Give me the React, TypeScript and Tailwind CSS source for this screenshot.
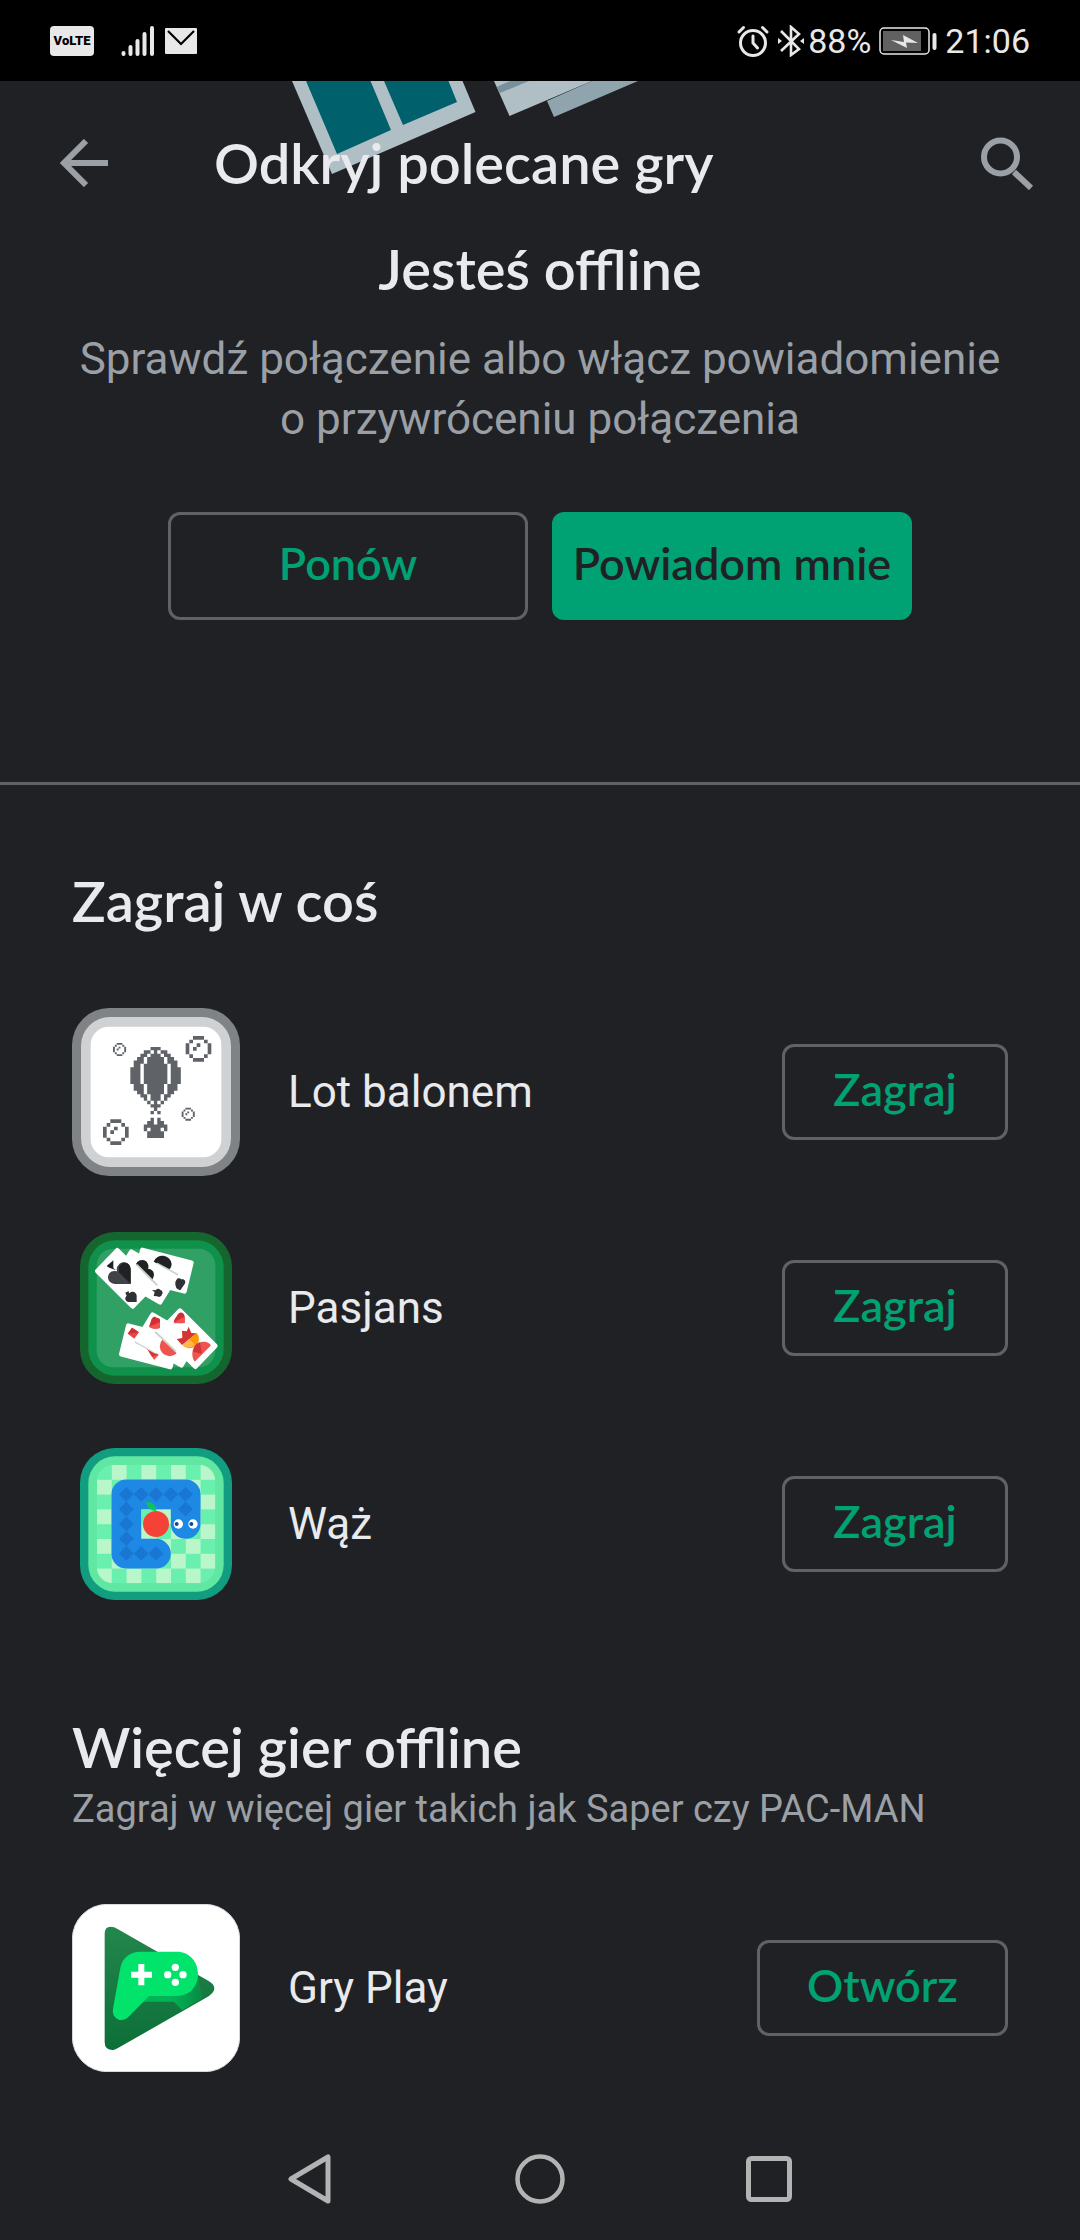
import React from 'react'

const BALLOON = [
    '......###......',
    '....##.#.##....',
    '...##.###.##...',
    '..##.#####.##..',
    '.###.#####.###.',
    '.##.#######.##.',
    '###.#######.###',
    '###.#######.###',
    '###.#######.###',
    '###.#######.###',
    '###.#######.###',
    '.###.#####.###.',
    '.###.#####.###.',
    '..##.#####.##..',
    '...##.###.##...',
    '....#.###.#....',
    '.....#.#.#.....',
    '......###......',
    '.......#.......',
    '......#.#......',
    '...............',
    '......#.#......',
    '.....##.##.....',
    '....#######....',
    '....#.###.#....',
    '.....#####.....',
    '.....#####.....',
]

const BUBBLE = [
    '..###..',
    '.#...#.',
    '#..#..#',
    '#.#...#',
    '#.....#',
    '.#...#.',
    '..###..',
]

const Pixels = ({ rows, x, y, size }: { rows: string[], x: number, y: number, size: number }) => {
    const d = rows.flatMap((row, r) => row.split('').map((cell, c) => (
        cell === '#' ? `M${x + c * size} ${y + r * size}h${size}v${size}h${-size}z` : ''
    ))).join('')
    return <path d={d} fill='#5f6368' />
}

const BalloonIcon = () => (
    <svg viewBox='36 54 504 504' className='size-[168px] shrink-0' aria-hidden='true'>
        <rect x='36' y='54' width='504' height='504' rx='112' fill='#7f8385' />
        <rect x='63' y='81' width='450' height='450' rx='86' fill='#cfd1d3' />
        <rect x='92' y='110' width='392' height='392' rx='54' fill='#fff' />
        <Pixels rows={BALLOON} x={211} y={171} size={10.1} />
        <Pixels rows={BUBBLE} x={377} y={138} size={11} />
        <Pixels rows={BUBBLE} x={129} y={388} size={11} />
        <Pixels rows={BUBBLE} x={159} y={159} size={5.6} />
        <Pixels rows={BUBBLE} x={365} y={353} size={5.6} />
    </svg>
)

const card = { fill: '#fff', stroke: '#fff', strokeWidth: 14, strokeLinejoin: 'round' as const }

const CardsIcon = () => (
    <svg viewBox='36 42 504 504' className='size-[168px] shrink-0' aria-hidden='true'>
        <rect x='60' y='66' width='456' height='456' rx='104' fill='#15652f' />
        <rect x='85' y='91' width='406' height='406' rx='80' fill='#0f904b' />
        <rect x='110' y='116' width='356' height='356' rx='50' fill='#30a064' />
        <path d='M247 120 394 158 373 244 225 206Z' {...card} />
        <path d='M281 155A28 28 0 0 1 335 162Q334 175 325 180Z' fill='#202124' />
        <path d='M346 218C344 204 358 202 364 208C374 206 379 214 374 222L361 241Q344 236 346 218Z' fill='#303134' />
        <path d='M290 160 354 194' stroke='#c8d5cb' strokeWidth='5' />
        <path d='M214 125 346 202 300 277 168 200Z' {...card} />
        <path d='M228 162A19 19 0 0 1 264 176A18 18 0 0 1 280 202L276 212Z' fill='#202124' />
        <path d='M281 258 284 247 276 240 287 241A8 8 0 0 1 301 240A8 8 0 0 1 306 253A9 9 0 0 1 292 259Z' fill='#303134' />
        <path d='M230 164 292 226' stroke='#c8d5cb' strokeWidth='6' />
        <path d='M172 121 278 227 218 289 112 183Z' {...card} />
        <path d='M140 168 160 151V174L168 181Q146 173 140 168Z' fill='#202124' />
        <path d='M178 162C190 151 211 159 212 178V222H166C145 220 139 202 148 190Q156 180 171 184Q168 171 178 162Z' fill='#424346' />
        <path d='M177 187V172C190 148 212 158 212 180V222Z' fill='#202124' />
        <path d='M196 248 206 243 207 250C216 240 230 246 230 257V276H209C196 276 192 264 200 257Z' fill='#303134' />
        <path d='M331 471 184 433 205 347 353 385Z' {...card} />
        <path d='M203 371 216 353 237 367 223 386Z' fill='#e5484a' />
        <path d='M203 371 216 353 237 367Z' fill='#cf3033' />
        <path d='M260 414 299 432 282 450Z' fill='#ef5350' />
        <path d='M260 414 299 432 276 440Z' fill='#d33537' />
        <path d='M225 395 288 430' stroke='#c8d5cb' strokeWidth='5' />
        <path d='M364 466 232 389 278 314 410 391Z' {...card} />
        <path d='M267 350 275 326Q283 315 291 324Q302 323 300 335L300 354Q280 360 267 350Z' fill='#cf3033' />
        <path d='M267 350 300 336V354Q280 360 267 350Z' fill='#ef5350' />
        <path d='M308 388 350 430A27 27 0 1 1 308 388Z' fill='#ef5350' />
        <path d='M286 366 348 424' stroke='#c8d5cb' strokeWidth='6' />
        <path d='M406 470 300 364 360 302 466 408Z' {...card} />
        <path d='M341 337C342 326 349 322 354 312C362 302 374 309 374 320V338Z' fill='#cf3033' />
        <path d='M341 337 374 320V340H350Q342 341 341 337Z' fill='#ef5350' />
        <path d='M350 387 367 384 366 362 380 364 386 350 394 369 410 370 366 405Z' fill='#d33537' />
        <path d='M410 368A25 25 0 0 1 367 405Z' fill='#ff9800' />
        <path d='M388 387 404 404A25 25 0 0 1 367 405Z' fill='#ffb74d' />
        <path d='M404 455C388 430 402 397 425 396C440 394 451 400 452 407Z' fill='#ef5350' />
        <path d='M399 425Q402 402 420 397L426 431Z' fill='#d33537' />
    </svg>
)

const CELL = 44.4
const SNAKE_BODY = [
    [0, 0], [1, 0], [2, 0], [3, 0], [4, 0], [4, 1],
    [0, 1], [0, 2], [0, 3], [0, 4], [1, 4], [2, 4],
]

const SnakeIcon = () => (
    <svg viewBox='36 30 504 504' className='size-[168px] shrink-0' aria-hidden='true'>
        <defs>
            <clipPath id='board'>
                <rect x='110' y='104' width='356' height='356' rx='50' />
            </clipPath>
        </defs>
        <rect x='60' y='54' width='456' height='456' rx='104' fill='#129c80' />
        <rect x='85' y='79' width='406' height='406' rx='80' fill='#60e8a2' />
        <g clipPath='url(#board)'>
            <rect x='110' y='104' width='356' height='356' fill='#69f0ae' />
            {Array.from({ length: 64 }, (_, i) => {
                const col = i % 8
                const row = Math.floor(i / 8)
                return (col + row) % 2 === 1 && (
                    <rect key={i} x={111 + col * CELL} y={105 + row * CELL} width={CELL} height={CELL} fill='#b9f6ca' />
                )
            })}
        </g>
        <path d='M377 282V193H199V371H288' fill='none' stroke='#1e88e5' strokeWidth='89' strokeLinecap='round' strokeLinejoin='round' />
        {SNAKE_BODY.map(([col, row]) => {
            const x = 199 + col * CELL
            const y = 193 + row * CELL
            return <path key={`${col}-${row}`} d={`M${x} ${y - 22}L${x + 22} ${y}L${x} ${y + 22}L${x - 22} ${y}Z`} fill='#1976d2' />
        })}
        <circle cx='288' cy='282' r='39' fill='#f44336' />
        <path d='M258 216Q288 214 289 243Q264 242 258 216Z' fill='#0fc25b' />
        <circle cx='355' cy='282' r='14' fill='#fff' />
        <circle cx='399' cy='282' r='14' fill='#fff' />
        <circle cx='350' cy='282' r='6' fill='#0d47a1' />
        <circle cx='394' cy='282' r='6' fill='#0d47a1' />
    </svg>
)

const PlayGamesIcon = () => (
    <svg viewBox='36 42 504 504' className='size-[168px] shrink-0' aria-hidden='true'>
        <defs>
            <linearGradient id='triangle' x1='0' y1='0' x2='0' y2='1'>
                <stop offset='0' stopColor='#23864d' />
                <stop offset='1' stopColor='#0b6f37' />
            </linearGradient>
            <linearGradient id='shade' x1='0' y1='0' x2='1' y2='0'>
                <stop offset='0.5' stopColor='#00b356' />
                <stop offset='1' stopColor='#0a8a45' />
            </linearGradient>
        </defs>
        <rect x='37' y='43' width='502' height='502' rx='104' fill='#fff' stroke='#dadce0' strokeWidth='3' />
        <path d='M134 132Q134 105 162 112Q166 113 174 118L446 273Q480 294 446 319L174 474Q166 479 160 480Q134 481 134 456Z' fill='url(#triangle)' />
        <path d='M240 335 270 300 414 255 427 325 366 361 342 335Z' fill='url(#shade)' />
        <path d='M240 185H350C390 185 414 216 414 252C414 290 388 318 350 318H267L208 378C188 402 154 388 159 356L181 234C186 206 208 185 240 185Z' fill='#02e36c' />
        <path d='M235 222H253V245H276V263H253V286H235V263H213V245H235Z' fill='#fff' />
        <circle cx='346' cy='232' r='11' fill='#fff' />
        <circle cx='346' cy='277' r='11' fill='#fff' />
        <circle cx='323' cy='254' r='11' fill='#fff' />
        <circle cx='369' cy='254' r='11' fill='#fff' />
    </svg>
)

const StatusBar = () => (
    <div className='flex h-[81px] items-center justify-between bg-black pl-[50px] pr-[50px] text-[#e8e8e8]'>
        <div className='flex items-center'>
            <span className='flex h-[30px] w-11 items-center justify-center rounded bg-[#e8e8e8] text-[13px] font-black text-black'>VoLTE</span>
            <svg viewBox='0 0 34 32' className='ml-[27px] h-8 w-[34px]' stroke='currentColor' strokeWidth='4' strokeLinecap='round' aria-hidden='true'>
                <path d='M2.500 28V29M9.500 22V29M16.500 16V29M23.500 9V29M31 3V29' />
            </svg>
            <svg viewBox='0 0 32 26' className='ml-[10px] h-[26px] w-8' aria-hidden='true'>
                <rect width='32' height='26' rx='1' fill='currentColor' />
                <path d='M3 3 16 16 29 3' fill='none' stroke='#000' strokeWidth='2.200' />
            </svg>
        </div>
        <div className='flex items-center text-[34px] leading-10'>
            <svg viewBox='0 0 32 32' className='size-8' fill='none' stroke='currentColor' strokeWidth='3' strokeLinecap='round' aria-hidden='true'>
                <circle cx='16' cy='18' r='12.500' />
                <path d='M16 11V18L20.500 23M2 7 6.500 2.500M30 7 25.500 2.500' />
            </svg>
            <svg viewBox='0 0 26 32' className='ml-[9px] h-8 w-[26px]' fill='none' stroke='currentColor' strokeWidth='2.600' aria-hidden='true'>
                <path d='M3 6 21 24 13 30V2L21 9 3 26' />
                <path d='M0 13V19L4 16ZM26 13V19L22 16Z' fill='currentColor' stroke='none' />
            </svg>
            <span className='ml-1'>88%</span>
            <svg viewBox='0 0 58 28' className='ml-2 h-7 w-[58px]' aria-hidden='true'>
                <rect x='1' y='1' width='49' height='26' rx='4' fill='none' stroke='currentColor' strokeWidth='1.500' />
                <rect x='4' y='4' width='38' height='20' fill='#616161' />
                <path d='M12 13 25 15 24 8 39 16 27 15.500 28 21Z' fill='currentColor' />
                <rect x='53.500' y='6' width='4' height='17' rx='2' fill='currentColor' />
            </svg>
            <span className='ml-2'>21:06</span>
        </div>
    </div>
)

const Header = () => (
    <header className='relative flex h-[156px] items-center pl-[60px] pr-[46px] pt-2'>
        {/* tail of the offline artwork, scrolled under the toolbar */}
        <svg viewBox='280 81 370 100' className='absolute left-[280px] top-0 h-[100px] w-[370px]' aria-hidden='true'>
            <path d='M292 81 332 174 475.500 112 462.500 81Z' fill='#b0bec5' />
            <path d='M306 81 337 154 391 130 370.500 81ZM384 81 403 125 457 102 448.500 81Z' fill='#00606c' />
            <path d='M494 81 509.500 116 592 81Z' fill='#b0bec5' />
            <path d='M510 81 496.500 87 500 93 529 81Z' fill='#78909c' />
            <path d='M592 81 547 101 554 117 638 81Z' fill='#90a4ae' />
        </svg>
        <button type='button' aria-label='Wstecz' className='relative cursor-pointer text-[#9aa0a6]'>
            <svg viewBox='0 0 48 48' className='size-12' fill='none' stroke='currentColor' strokeWidth='6' aria-hidden='true'>
                <path d='M48 24H5M26 2 4 24 26 46' />
            </svg>
        </button>
        <h1 className='relative ml-[106px] font-[Lato] text-[56px] leading-[64px] font-semibold'>Odkryj polecane gry</h1>
        <button type='button' aria-label='Szukaj' className='relative ml-auto cursor-pointer text-[#9aa0a6]'>
            <svg viewBox='0 0 53 53' className='size-[53px]' fill='none' stroke='currentColor' strokeWidth='6' aria-hidden='true'>
                <circle cx='19.500' cy='20' r='16.500' />
                <path d='M33 35 50 51' />
            </svg>
        </button>
    </header>
)

const GameRow = ({ icon, name, action, wide }: { icon: React.ReactNode, name: string, action: string, wide?: boolean }) => (
    <li className='flex h-[216px] items-center gap-12'>
        {icon}
        <span className='text-[44px] leading-[60px]'>{name}</span>
        <button type='button' className={`ml-auto h-24 cursor-pointer rounded-xl border-[3px] border-[#5f6368] pb-1.5 font-[Lato] text-[45px] leading-[60px] font-semibold text-[#00a173] ${wide ? 'w-[251px]' : 'w-[226px]'}`}>
            {action}
        </button>
    </li>
)

const NavBar = () => (
    <nav className='mt-auto grid h-[122px] grid-cols-[1fr_50px_1fr] items-center gap-[181px] text-[#b3b3b3]'>
        <button type='button' aria-label='Wstecz' className='cursor-pointer justify-self-end'>
            <svg viewBox='0 0 50 50' className='size-[50px]' fill='none' stroke='currentColor' strokeWidth='5' strokeLinejoin='round' aria-hidden='true'>
                <path d='M44 3V47L7 25Z' />
            </svg>
        </button>
        <button type='button' aria-label='Ekran główny' className='cursor-pointer'>
            <svg viewBox='0 0 50 50' className='size-[50px]' fill='none' stroke='currentColor' strokeWidth='4.500' aria-hidden='true'>
                <circle cx='25' cy='25' r='22.500' />
            </svg>
        </button>
        <button type='button' aria-label='Ostatnie' className='cursor-pointer justify-self-start'>
            <svg viewBox='0 0 46 46' className='size-[46px]' fill='none' stroke='currentColor' strokeWidth='5' aria-hidden='true'>
                <rect x='2.500' y='2.500' width='41' height='41' rx='3' />
            </svg>
        </button>
    </nav>
)

const App = () => {
    return (
        <div className='flex min-h-screen flex-col bg-[#202124] font-[Roboto] text-[#e8eaed]'>
            <StatusBar />
            <Header />
            <main>
                <section className='border-b-[3px] border-[#5f6368] px-[72px] pb-[162px] text-center'>
                    <h2 className='font-[Lato] text-[56px] leading-[64px] font-semibold'>Jesteś offline</h2>
                    <p className='mt-7 text-[44px] leading-[60px] text-[#9aa0a6]'>
                        <span className='block'>Sprawdź połączenie albo włącz powiadomienie</span>
                        <span className='block'>o przywróceniu połączenia</span>
                    </p>
                    <div className='mt-[63px] flex justify-center gap-6 font-[Lato] text-[45px] leading-[60px] font-semibold'>
                        <button type='button' className='h-[108px] w-[360px] cursor-pointer rounded-xl border-[3px] border-[#5f6368] pb-1.5 text-[#00a173]'>Ponów</button>
                        <button type='button' className='h-[108px] w-[360px] cursor-pointer rounded-xl bg-[#00a173] pb-1.5 text-[#202124]'>Powiadom mnie</button>
                    </div>
                </section>
                <section className='mt-[84px] px-[72px]'>
                    <h2 className='font-[Lato] text-[56px] leading-[64px] font-semibold'>Zagraj w coś</h2>
                    <ul className='mt-[51px]'>
                        <GameRow icon={<BalloonIcon />} name='Lot balonem' action='Zagraj' />
                        <GameRow icon={<CardsIcon />} name='Pasjans' action='Zagraj' />
                        <GameRow icon={<SnakeIcon />} name='Wąż' action='Zagraj' />
                    </ul>
                </section>
                <section className='mt-[83px] px-[72px]'>
                    <h2 className='font-[Lato] text-[56px] leading-[64px] font-semibold'>Więcej gier offline</h2>
                    <p className='mt-2 text-[38px] leading-[44px] text-[#9aa0a6]'>Zagraj w więcej gier takich jak Saper czy PAC-MAN</p>
                    <ul className='mt-[49px]'>
                        <GameRow icon={<PlayGamesIcon />} name='Gry Play' action='Otwórz' wide />
                    </ul>
                </section>
            </main>
            <NavBar />
        </div>
    )
}

export default App
